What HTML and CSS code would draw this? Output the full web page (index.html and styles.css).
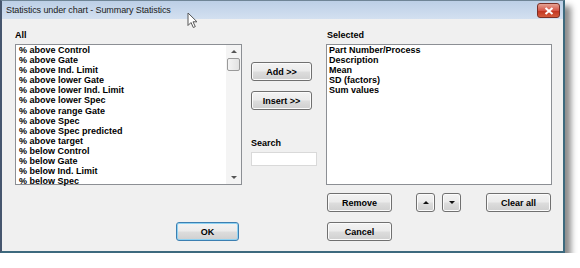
FILE: index.html
```html
<!DOCTYPE html>
<html>
<head>
  <meta charset="UTF-8">
  <title>Statistics under chart - Summary Statistics</title>
  <link rel="stylesheet" href="styles.css">
</head>
<body>
<div class="window">
  <div class="titlebar">
    <span class="title">Statistics under chart - Summary Statistics</span>
    <div class="closebtn">
      <svg width="10" height="8" viewBox="0 0 10 8"><path d="M1.5 1 L8.5 7 M8.5 1 L1.5 7" stroke="#fff" stroke-width="2"/></svg>
    </div>
  </div>
  <div class="client">
    <div class="label label-all">All</div>
    <div class="label label-selected">Selected</div>

    <div class="listbox list-all">
      <div class="items">
        <div>% above Control</div>
        <div>% above Gate</div>
        <div>% above Ind. Limit</div>
        <div>% above lower Gate</div>
        <div>% above lower Ind. Limit</div>
        <div>% above lower Spec</div>
        <div>% above range Gate</div>
        <div>% above Spec</div>
        <div>% above Spec predicted</div>
        <div>% above target</div>
        <div>% below Control</div>
        <div>% below Gate</div>
        <div>% below Ind. Limit</div>
        <div>% below Spec</div>
      </div>
      <div class="scrollbar">
        <div class="sb-btn"><span class="tri-up small"></span></div>
        <div class="sb-track"><div class="sb-thumb"></div></div>
        <div class="sb-btn"><span class="tri-down small"></span></div>
      </div>
    </div>

    <div class="middle">
      <div class="btn btn-add">Add &gt;&gt;</div>
      <div class="btn btn-insert">Insert &gt;&gt;</div>
      <div class="label label-search">Search</div>
      <div class="searchbox"></div>
    </div>

    <div class="listbox list-selected">
      <div class="items">
        <div>Part Number/Process</div>
        <div>Description</div>
        <div>Mean</div>
        <div>SD (factors)</div>
        <div>Sum values</div>
      </div>
    </div>

    <div class="row-tools">
      <div class="btn btn-wide">Remove</div>
      <div class="btn btn-arrow btn-up"><span class="tri-up"></span></div>
      <div class="btn btn-arrow btn-down"><span class="tri-down"></span></div>
      <div class="btn btn-wide btn-clear">Clear all</div>
    </div>

    <div class="btn btn-ok">OK</div>
    <div class="btn btn-wide btn-cancel">Cancel</div>
  </div>
</div>

<svg class="cursor" width="12" height="17" viewBox="0 0 12 17">
  <path d="M1 1 L1 13.5 L4 10.5 L6.3 15.5 L8.3 14.6 L6 9.8 L10 9.8 Z" fill="#fff" stroke="#555" stroke-width="1" stroke-linejoin="round"/>
</svg>
</body>
</html>
```

FILE: styles.css
```css
body {
  margin: 0;
  background: #ffffff;
  font-family: "Liberation Sans", Arial, sans-serif;
  font-size: 9px;
  color: #000000;
}

.window {
  width: 561px;
  border: 2px solid #3d6a7e;
  border-top: 1px solid #6f8596;
  border-left-color: #46566e;
  background: #f0f0f0;
  box-shadow: 6px 6px 6px rgba(0, 0, 0, 0.45);
}

.titlebar {
  height: 18px;
  display: flex;
  align-items: center;
  padding-left: 4px;
  background: linear-gradient(#bccfe6, #d3e0f0);
  position: relative;
}

.title {
  font-size: 9px;
  color: #1b1b1b;
  letter-spacing: -0.1px;
}

.closebtn {
  position: absolute;
  right: 3px;
  top: 2px;
  width: 21px;
  height: 13px;
  border: 1px solid #7a2f26;
  border-radius: 3px;
  background: linear-gradient(#e6a293, #d5574a 50%, #c0321f 51%, #d45a3c);
  display: flex;
  align-items: center;
  justify-content: center;
}

.client {
  display: grid;
  grid-template-columns: 236px 75px 226px;
  grid-template-rows: 25px 141px auto auto;
  padding: 0 0 10px 13px;
}

.label {
  font-weight: bold;
  line-height: 12px;
}

.label-all,
.label-selected {
  align-self: end;
  padding-bottom: 3px;
}

.label-all {
  grid-column: 1;
  grid-row: 1;
}

.label-selected {
  grid-column: 3;
  grid-row: 1;
  padding-left: 1px;
}

.listbox {
  border: 1px solid #8c8f94;
  background: #ffffff;
  display: flex;
  font-weight: bold;
  line-height: 10.1px;
}

.list-all {
  grid-column: 1;
  grid-row: 2;
  width: 225px;
}

.list-selected {
  grid-column: 3;
  grid-row: 2;
}

.items {
  flex: 1;
  padding-left: 3px;
}

.list-selected .items {
  padding-left: 2px;
}

.scrollbar {
  width: 15px;
  display: flex;
  flex-direction: column;
  background: #f4f4f4;
}

.sb-btn {
  height: 13px;
  display: flex;
  align-items: center;
  justify-content: center;
}

.sb-track {
  flex: 1;
}

.sb-thumb {
  margin: 0 1px 0 1px;
  height: 11px;
  border: 1px solid #9a9a9a;
  border-radius: 2px;
  background: linear-gradient(90deg, #f4f4f4, #e2e2e2);
}

.tri-up,
.tri-down {
  width: 0;
  height: 0;
  border-left: 3px solid transparent;
  border-right: 3px solid transparent;
}

.tri-up {
  border-bottom: 3px solid #111;
}

.tri-down {
  border-top: 3px solid #111;
}

.tri-up.small {
  border-bottom-color: #555;
}

.tri-down.small {
  border-top-color: #555;
}

.middle {
  grid-column: 2;
  grid-row: 1 / span 2;
  padding-top: 43px;
  display: flex;
  flex-direction: column;
  align-items: flex-start;
}

.btn {
  box-sizing: border-box;
  height: 19px;
  border: 1px solid #707070;
  border-radius: 3px;
  background: linear-gradient(#f3f3f3, #ebebeb 48%, #dddddd 52%, #cfcfcf);
  box-shadow: inset 0 0 0 1px #fbfbfb;
  font-weight: bold;
  display: flex;
  align-items: center;
  justify-content: center;
}

.btn-add,
.btn-insert {
  width: 61px;
}

.btn-insert {
  margin-top: 10px;
}

.label-search {
  margin-top: 27px;
}

.searchbox {
  margin-top: 3px;
  width: 66px;
  height: 14px;
  box-sizing: border-box;
  border: 1px solid #d9d9d9;
  background: #ffffff;
}

.row-tools {
  grid-column: 3;
  grid-row: 3;
  margin-top: 8px;
  display: flex;
  padding-left: 1px;
}

.btn-wide {
  width: 65px;
}

.btn-arrow {
  width: 19px;
}

.btn-up {
  margin-left: 24px;
}

.btn-down {
  margin-left: 7px;
}

.btn-clear {
  margin-left: auto;
  margin-right: 1px;
}

.btn-ok {
  grid-column: 1;
  grid-row: 4;
  width: 63px;
  margin: 10px 0 0 161px;
  border-color: #3c7fb1;
  box-shadow: inset 0 0 0 1px #8fd2f2;
}

.btn-cancel {
  grid-column: 3;
  grid-row: 4;
  margin: 10px 0 0 1px;
}

.cursor {
  position: absolute;
  left: 187px;
  top: 12px;
}
```
